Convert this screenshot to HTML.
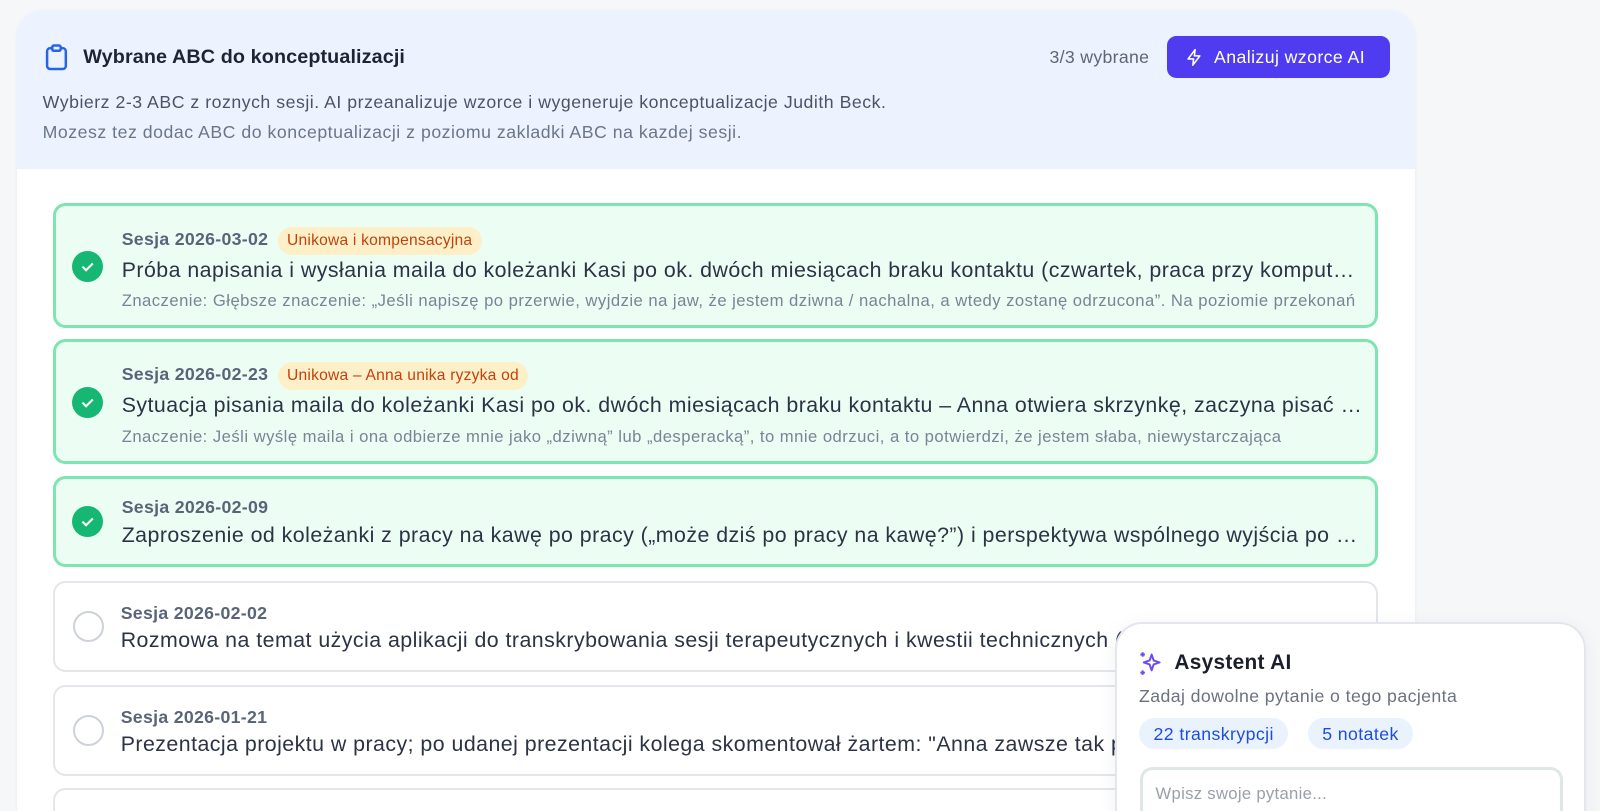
<!DOCTYPE html>
<html><head><meta charset="utf-8"><style>
*{box-sizing:border-box;margin:0;padding:0}
html,body{width:1600px;height:811px;overflow:hidden;background:#f6f7f9}
#w{zoom:1.0412;position:relative;width:1536px;height:779px;overflow:hidden;font-family:"Liberation Sans",sans-serif}
.card{position:absolute;left:16px;top:10px;width:1343px;height:769px;background:#fff;border-radius:24px 24px 0 0;box-shadow:0 1px 3px rgba(0,0,0,.06);overflow:hidden}
.hdr{height:152px;background:#edf3fe;position:relative}
.title{position:absolute;left:64px;top:34px;font-size:19px;font-weight:bold;color:#1e2433;letter-spacing:.1px}
.clip{position:absolute;left:27px;top:32px}
.d1{position:absolute;left:25px;top:78px;font-size:17px;color:#4a5468;letter-spacing:.5px}
.d2{position:absolute;left:25px;top:107px;font-size:17px;color:#6b7589;letter-spacing:.5px}
.cnt{position:absolute;left:992px;top:35px;font-size:17px;color:#5d6678;letter-spacing:.3px}
.btn{position:absolute;left:1105px;top:25px;width:214px;height:40px;background:#4f3cf0;border-radius:9px;color:#fff;font-size:17px;display:flex;align-items:center;padding-left:45px;letter-spacing:.4px}
.btn svg{position:absolute;left:17px;top:10px}
.item{position:absolute;left:35px;width:1272px;border-radius:12px;border:2px solid #e3e6eb;background:#fff;overflow:hidden}
.item.sel{border:3px solid #7ee4b0;background:#ecfdf4}
.ck{position:absolute;left:17px;width:30px;height:30px;border-radius:50%}
.sel .ck{background:#16b673;left:15px}
.un .ck{border:2px solid #cdd2da}
.s{position:absolute;left:63px;font-size:17px;font-weight:bold;color:#5a6478;white-space:nowrap;line-height:28px;letter-spacing:.3px}
.tag{display:inline-block;margin-left:9px;padding:0 9px;line-height:27px;background:#fdf0c8;color:#c2410c;font-weight:normal;font-size:15px;border-radius:14px;letter-spacing:.2px}
.m{position:absolute;left:63px;width:1193px;font-size:20.5px;color:#2b3344;white-space:nowrap;overflow:hidden;text-overflow:ellipsis;letter-spacing:.45px}
.z{position:absolute;left:63px;width:1193px;font-size:16px;color:#7a8496;white-space:nowrap;overflow:hidden;text-overflow:ellipsis;letter-spacing:.45px}
.ai{position:absolute;left:1071px;top:597px;width:452px;height:200px;background:#fff;border:2px solid #e3e6ec;border-bottom:none;border-radius:26px 26px 0 0;box-shadow:0 4px 20px rgba(0,0,0,.06)}
.ai h3{position:absolute;left:55px;top:26px;font-size:20px;color:#1b1f2b;letter-spacing:.3px}
.ai .sub{position:absolute;left:21px;top:60px;font-size:17px;color:#6b7280;letter-spacing:.4px}
.pill{position:absolute;top:91px;height:29px;background:#eaf2fe;color:#1d4ed8;border-radius:15px;font-size:17px;padding:5px 14px;letter-spacing:.4px}
.inp{position:absolute;left:22px;top:138px;width:406px;height:60px;border:3px solid #dfe8e4;border-bottom:none;border-radius:12px 12px 0 0;padding:13px 12px;font-size:16px;color:#9aa0a8;letter-spacing:.3px}
</style></head><body><div id="w">
<div class="card">
 <div class="hdr">
  <svg class="clip" width="22" height="26" viewBox="0 0 22 26" fill="none" stroke="#2563eb" stroke-width="2.4" stroke-linejoin="round"><rect x="2" y="4" width="18" height="20" rx="3"/><rect x="7" y="1.5" width="8" height="5" rx="1.5" fill="#edf3fe"/></svg>
  <div class="title">Wybrane ABC do konceptualizacji</div>
  <div class="d1">Wybierz 2-3 ABC z roznych sesji. AI przeanalizuje wzorce i wygeneruje konceptualizacje Judith Beck.</div>
  <div class="d2">Mozesz tez dodac ABC do konceptualizacji z poziomu zakladki ABC na kazdej sesji.</div>
  <div class="cnt">3/3 wybrane</div>
  <div class="btn"><svg width="18" height="20" viewBox="0 0 24 24" fill="none" stroke="#fff" stroke-width="2" stroke-linejoin="round"><path d="M13 2L4 14h7l-1 8 9-12h-7z"/></svg>Analizuj wzorce AI</div>
 </div>
 <div class="item sel" style="top:185px;height:120px"><div class="ck" style="top:43px"><svg width="30" height="30" viewBox="0 0 30 30"><path d="M10 15l3.5 3.5L20 12" stroke="#fff" stroke-width="2" fill="none"/></svg></div>
  <div class="s" style="top:18px">Sesja 2026-03-02<span class="tag">Unikowa i kompensacyjna</span></div>
  <div class="m" style="top:50px">Próba napisania i wysłania maila do koleżanki Kasi po ok. dwóch miesiącach braku kontaktu (czwartek, praca przy komputerze, wieczorem)</div>
  <div class="z" style="top:82px">Znaczenie: Głębsze znaczenie: „Jeśli napiszę po przerwie, wyjdzie na jaw, że jestem dziwna / nachalna, a wtedy zostanę odrzucona”. Na poziomie przekonań</div></div>
 <div class="item sel" style="top:316px;height:120px"><div class="ck" style="top:43px"><svg width="30" height="30" viewBox="0 0 30 30"><path d="M10 15l3.5 3.5L20 12" stroke="#fff" stroke-width="2" fill="none"/></svg></div>
  <div class="s" style="top:17px">Sesja 2026-02-23<span class="tag">Unikowa – Anna unika ryzyka od</span></div>
  <div class="m" style="top:49px">Sytuacja pisania maila do koleżanki Kasi po ok. dwóch miesiącach braku kontaktu – Anna otwiera skrzynkę, zaczyna pisać wiadomość</div>
  <div class="z" style="top:81px">Znaczenie: Jeśli wyślę maila i ona odbierze mnie jako „dziwną” lub „desperacką”, to mnie odrzuci, a to potwierdzi, że jestem słaba, niewystarczająca</div></div>
 <div class="item sel" style="top:447px;height:88px"><div class="ck" style="top:26px"><svg width="30" height="30" viewBox="0 0 30 30"><path d="M10 15l3.5 3.5L20 12" stroke="#fff" stroke-width="2" fill="none"/></svg></div>
  <div class="s" style="top:14px">Sesja 2026-02-09</div>
  <div class="m" style="top:42px">Zaproszenie od koleżanki z pracy na kawę po pracy („może dziś po pracy na kawę?”) i perspektywa wspólnego wyjścia po pracy z zespołem</div></div>
 <div class="item un" style="top:548px;height:87px"><div class="ck" style="top:27px"></div>
  <div class="s" style="top:15px">Sesja 2026-02-02</div>
  <div class="m" style="top:43px">Rozmowa na temat użycia aplikacji do transkrybowania sesji terapeutycznych i kwestii technicznych (nagrywanie)</div></div>
 <div class="item un" style="top:648px;height:87px"><div class="ck" style="top:27px"></div>
  <div class="s" style="top:15px">Sesja 2026-01-21</div>
  <div class="m" style="top:43px">Prezentacja projektu w pracy; po udanej prezentacji kolega skomentował żartem: "Anna zawsze tak perfekcyjnie"</div></div>
 <div class="item un" style="top:747px;height:40px;border-bottom:none;border-radius:12px 12px 0 0"></div>
</div>
<div class="ai">
 <svg style="position:absolute;left:19px;top:24px" width="26" height="28" viewBox="0 0 24 24" fill="none" stroke="#6d4cf0" stroke-width="1.8" stroke-linejoin="round"><path d="M13 4l1.8 5.2L20 11l-5.2 1.8L13 18l-1.8-5.2L6 11l5.2-1.8z"/><path d="M5 2v4M3 4h4M5 18v4M3 20h4"/></svg>
 <h3>Asystent AI</h3>
 <div class="sub">Zadaj dowolne pytanie o tego pacjenta</div>
 <div class="pill" style="left:21px">22 transkrypcji</div>
 <div class="pill" style="left:183px">5 notatek</div>
 <div class="inp">Wpisz swoje pytanie...</div>
</div>
</div></body></html>
